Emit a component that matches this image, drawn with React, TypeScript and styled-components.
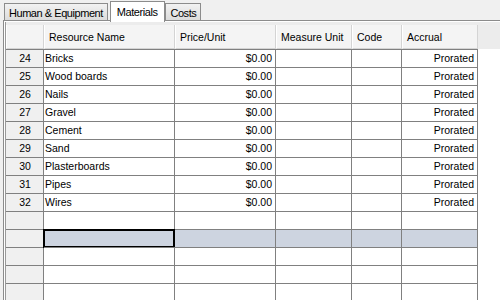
import * as React from 'react'
import styled, { createGlobalStyle } from 'styled-components'

const Global = createGlobalStyle`
  html, body {
    margin: 0;
    padding: 0;
    background: #f0f0f0;
    font-family: "Liberation Sans", Arial, sans-serif;
    font-size: 10.5px;
    color: #000;
  }
`

const Page = styled.div`
  width: 500px;
  height: 300px;
  overflow: hidden;
  padding-left: 3px;
  box-sizing: border-box;
`

const TabStrip = styled.div`
  display: flex;
  align-items: flex-end;
  height: 21px;
  padding-left: 1px;
  position: relative;
  z-index: 1;
`

const Tab = styled.div<{ $active?: boolean }>`
  box-sizing: border-box;
  height: ${p => (p.$active ? 21 : 18)}px;
  padding: ${p => (p.$active ? '3px 7px 0 6px' : '2px 4px 0 4px')};
  margin-bottom: ${p => (p.$active ? -1 : 0)}px;
  border: 1px solid #8c8c8c;
  border-bottom: ${p => (p.$active ? 'none' : '1px solid #8c8c8c')};
  background: ${p => (p.$active ? '#fff' : 'linear-gradient(#f2f2f2, #dcdcdc)')};
  margin-right: ${p => (p.$active ? 0 : 1)}px;
  margin-left: ${p => (p.$active ? 1 : 0)}px;
  white-space: nowrap;
  line-height: 14px;
  font-size: 11px;
  letter-spacing: -0.45px;
`

const Panel = styled.div`
  border-top: 1px solid #8c8c8c;
  border-left: 1px solid #8c8c8c;
  background: #fff;
  padding: 1px 0 0 1px;
  margin-top: -1px;
  height: 300px;
`

const Grid = styled.div`
  border-left: 1px solid #9a9a9a;
  background: #fff;
  height: 100%;
`

const HeaderRow = styled.div`
  display: flex;
  background: #ececec;
  padding-top: 3px;
  height: 24px;
  box-sizing: content-box;
`

const HeadCell = styled.div<{ $w: number }>`
  box-sizing: border-box;
  width: ${p => p.$w}px;
  height: 24px;
  background: #f4f4f4;
  border-left: 1px solid #fff;
  border-right: 1px solid #d4d4d4;
  border-bottom: 1px solid #d4d4d4;
  padding: 5px 0 0 4px;
  line-height: 14px;
  white-space: nowrap;
`

const Row = styled.div<{ $selected?: boolean }>`
  display: flex;
  width: max-content;
  height: 18px;
  background: ${p => (p.$selected ? '#cdd4e0' : '#fff')};
`

const NumCell = styled.div`
  box-sizing: border-box;
  width: 38px;
  height: 18px;
  background: #f0f0f0;
  border-top: 1px solid #808080;
  border-right: 1px solid #808080;
  text-align: center;
  line-height: 17px;
  padding-left: 1px;
`

const Cell = styled.div<{ $w: number; $right?: boolean; $focus?: boolean }>`
  box-sizing: border-box;
  position: relative;
  width: ${p => p.$w}px;
  height: 18px;
  border-top: 1px solid #808080;
  border-right: 1px solid #808080;
  text-align: ${p => (p.$right ? 'right' : 'left')};
  padding: 0 3px 0 1px;
  line-height: 17px;
  white-space: nowrap;
  ${p =>
    p.$focus &&
    `
    &::after {
      content: '';
      position: absolute;
      left: -1px;
      top: -1px;
      right: -1px;
      bottom: -1px;
      border: 2px solid #000;
    }
  `}
`

const widths = [131, 101, 76, 50, 76]
const heads = ['Resource Name', 'Price/Unit', 'Measure Unit', 'Code', 'Accrual']

const items = [
  'Bricks',
  'Wood boards',
  'Nails',
  'Gravel',
  'Cement',
  'Sand',
  'Plasterboards',
  'Pipes',
  'Wires',
]

export default function App() {
  return (
    <Page>
      <Global />
      <TabStrip>
        <Tab>Human &amp; Equipment</Tab>
        <Tab $active>Materials</Tab>
        <Tab>Costs</Tab>
      </TabStrip>
      <Panel>
        <Grid>
          <HeaderRow>
            <HeadCell $w={38} />
            {heads.map((h, i) => (
              <HeadCell key={h} $w={widths[i]}>
                {h}
              </HeadCell>
            ))}
          </HeaderRow>
          {items.map((name, i) => (
            <Row key={name}>
              <NumCell>{24 + i}</NumCell>
              <Cell $w={widths[0]}>{name}</Cell>
              <Cell $w={widths[1]} $right>
                $0.00
              </Cell>
              <Cell $w={widths[2]} />
              <Cell $w={widths[3]} />
              <Cell $w={widths[4]} $right>
                Prorated
              </Cell>
            </Row>
          ))}
          {[0, 1, 2, 3, 4].map(i => (
            <Row key={'e' + i} $selected={i === 1}>
              <NumCell />
              <Cell $w={widths[0]} $focus={i === 1} />
              <Cell $w={widths[1]} />
              <Cell $w={widths[2]} />
              <Cell $w={widths[3]} />
              <Cell $w={widths[4]} />
            </Row>
          ))}
        </Grid>
      </Panel>
    </Page>
  )
}
